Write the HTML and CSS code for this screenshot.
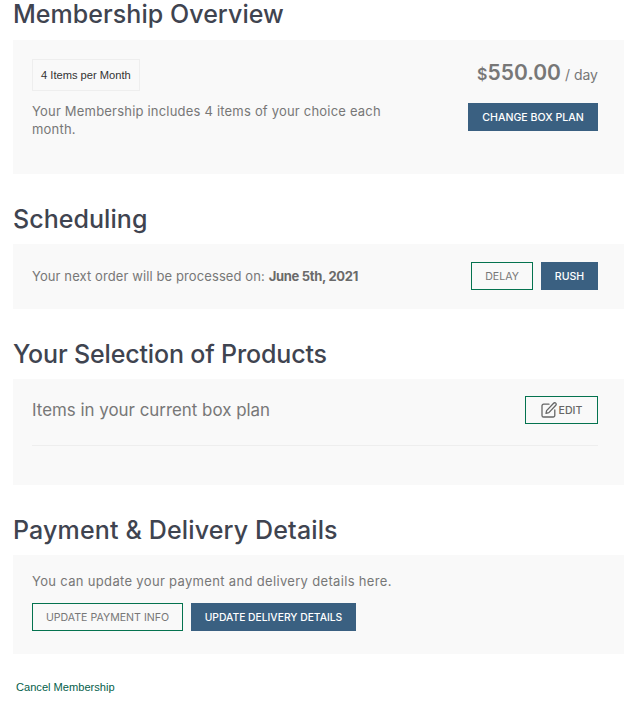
FILE: index.html
```html
<!DOCTYPE html>
<html lang="en">
<head>
<meta charset="utf-8">
<title>Membership</title>
<link rel="stylesheet" href="styles.css">
</head>
<body>
<main class="page">
  <h2 class="heading heading-first">Membership Overview</h2>
  <section class="card card-overview">
    <div class="overview-left">
      <span class="tag">4 Items per Month</span>
      <p class="text overview-text">Your Membership includes 4 items of your choice each month.</p>
    </div>
    <div class="overview-right">
      <div class="price"><span class="currency">$</span><span class="amount">550.00</span><span class="period"> / day</span></div>
      <a class="btn btn-solid btn-plan">CHANGE BOX PLAN</a>
    </div>
  </section>

  <h2 class="heading">Scheduling</h2>
  <section class="card card-schedule">
    <p class="text">Your next order will be processed on: <strong>June 5th, 2021</strong></p>
    <div class="actions">
      <a class="btn btn-outline btn-delay">DELAY</a>
      <a class="btn btn-solid btn-rush">RUSH</a>
    </div>
  </section>

  <h2 class="heading heading-products">Your Selection of Products</h2>
  <section class="card card-products">
    <div class="products-head">
      <span class="products-title">Items in your current box plan</span>
      <a class="btn btn-outline btn-edit">
        <svg class="edit-icon" viewBox="0 0 16 16" width="16" height="16" fill="none" stroke="currentColor" stroke-width="1.3" stroke-linecap="round" stroke-linejoin="round" aria-hidden="true"><path d="M8 2.2H2.6A1.6 1.6 0 0 0 1 3.8v9.6A1.6 1.6 0 0 0 2.6 15h9.6a1.6 1.6 0 0 0 1.6-1.6V8"/><path d="M5.6 8.6 12.6 1.2a1.5 1.5 0 0 1 2.2 2.1L7.9 10.6l-2.9.7z"/></svg>EDIT</a>
    </div>
  </section>

  <h2 class="heading heading-payment">Payment &amp; Delivery Details</h2>
  <section class="card card-payment">
    <p class="text">You can update your payment and delivery details here.</p>
    <div class="actions">
      <a class="btn btn-outline btn-payment">UPDATE PAYMENT INFO</a>
      <a class="btn btn-solid btn-delivery">UPDATE DELIVERY DETAILS</a>
    </div>
  </section>

  <a class="cancel">Cancel Membership</a>
</main>
</body>
</html>
```
FILE: styles.css
```css
* { box-sizing: border-box; }
html, body { margin: 0; padding: 0; background: #fff; }
body { font-family: "Inter", "Liberation Sans", sans-serif; color: #777; }
.page { width: 628px; height: 706px; padding: 0 4px 0 13px; overflow: hidden; }

.heading {
  margin: 0;
  height: 70px;
  padding-top: 29px;
  font-size: 25px;
  line-height: 33px;
  letter-spacing: .05px;
  font-weight: 500;
  color: #3f4450;
}
.heading-first { height: 40px; padding-top: 0; line-height: 28px; }
.heading-products { letter-spacing: -.15px; }
.heading-payment { letter-spacing: .15px; }

.card { background: #f9f9f9; }
.text { margin: 0; font-size: 13px; line-height: 18px; color: #777; }
.text strong { font-weight: 700; color: #6a6a6a; letter-spacing: -.3px; }

.card-overview { height: 134px; padding: 19px 26px 0 19px; display: flex; justify-content: space-between; }
.overview-left { width: 370px; }
.tag {
  display: inline-block;
  height: 32px;
  padding: 0 8px;
  font: 11.15px/30px "Liberation Sans", sans-serif;
  color: #333;
  border: 1px solid #eee;
}
.overview-text { margin-top: 11px; letter-spacing: .2px; }
.overview-right { display: flex; flex-direction: column; align-items: flex-end; }
.price { height: 30px; line-height: 27px; color: #777; white-space: nowrap; }
.currency { font-size: 16px; font-weight: 600; }
.amount { font-size: 21px; font-weight: 600; }
.period { font-size: 14px; font-weight: 400; }

.btn {
  display: inline-flex;
  align-items: center;
  justify-content: center;
  height: 28px;
  font-size: 10.6px;
  white-space: nowrap;
}
.btn-solid { background: #3a6081; color: #fff; font-weight: 500; }
.btn-outline { border: 1px solid #04734f; color: #777; }
.btn-plan { width: 130px; margin-top: 14px; }

.card-schedule { height: 65px; padding: 18px 26px 0 19px; display: flex; justify-content: space-between; }
.card-schedule .text { line-height: 28px; letter-spacing: .1px; }
.actions { display: flex; gap: 8px; }
.btn-delay { width: 62px; }
.btn-rush { width: 57px; }

.card-products { height: 106px; padding: 17px 26px 0 19px; }
.products-head { display: flex; justify-content: space-between; height: 50px; border-bottom: 1px solid #eee; }
.products-title { font-size: 16.9px; line-height: 28px; color: #777; }
.btn-edit { width: 73px; gap: 2px; color: #666; font-weight: 500; }
.edit-icon { flex: none; }

.card-payment { height: 99px; padding: 17px 26px 0 19px; }
.card-payment > .text { letter-spacing: .33px; }
.card-payment .actions { margin-top: 13px; }
.btn-payment { width: 151px; }
.btn-delivery { width: 165px; font-size: 10.3px; }

.cancel {
  display: block;
  margin: 27px 0 0 3px;
  font: 11.1px/12px "Liberation Sans", sans-serif;
  color: #04604a;
}
```
